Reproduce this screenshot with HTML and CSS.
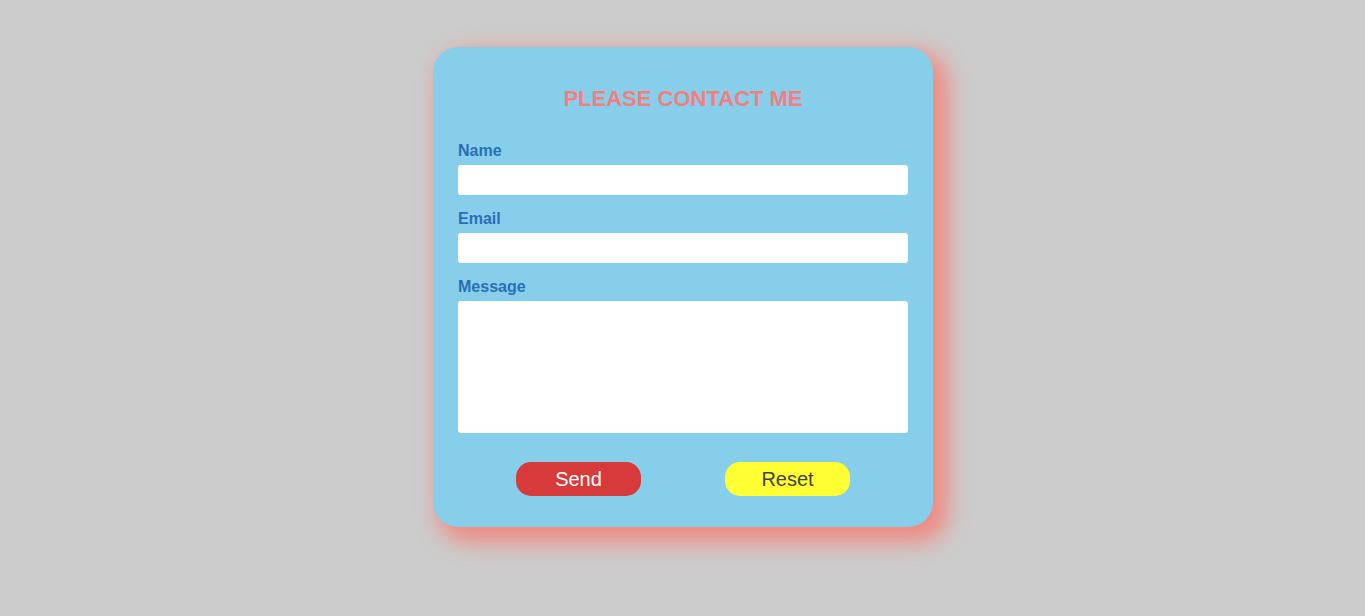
FILE: index.html
```html
<!DOCTYPE html>
<html lang="en">
<head>
<meta charset="utf-8">
<title>Contact</title>
<link rel="stylesheet" href="styles.css">
</head>
<body>
<main class="page">
  <form class="card">
    <h2 class="title">PLEASE CONTACT ME</h2>
    <label class="label" for="name">Name</label>
    <input class="field" id="name" type="text">
    <label class="label" for="email">Email</label>
    <input class="field" id="email" type="email">
    <label class="label" for="msg">Message</label>
    <textarea class="field area" id="msg"></textarea>
    <div class="actions">
      <button class="btn send" type="button">Send</button>
      <button class="btn reset" type="button">Reset</button>
    </div>
  </form>
</main>
</body>
</html>
```
FILE: styles.css
```css
* { box-sizing: border-box; }
html, body { margin: 0; padding: 0; }
body {
  background: #cccccc;
  font-family: "Liberation Sans", Arial, sans-serif;
  height: 616px;
  overflow: hidden;
}
.page {
  display: flex;
  justify-content: center;
  padding-top: 47px;
  padding-left: 1px;
}
.card {
  width: 500px;
  height: 480px;
  background: #87ceeb;
  border-radius: 25px;
  padding: 25px 25px 31px;
  box-shadow: 10px 10px 22px 5px #f08a80;
  display: flex;
  flex-direction: column;
}
.title {
  margin: 15px 0 30px;
  font-size: 22px;
  line-height: 24px;
  font-weight: bold;
  color: #f08080;
  text-align: center;
}
.label {
  display: block;
  font-size: 16px;
  line-height: 20px;
  font-weight: bold;
  color: #2a6fb6;
  margin-bottom: 4px;
}
.field {
  display: block;
  width: 100%;
  height: 30px;
  border: none;
  border-radius: 3px;
  background: #ffffff;
  margin: 0 0 14px;
  font-family: inherit;
}
.area {
  height: 132px;
  resize: none;
  margin-bottom: 29px;
}
.actions {
  display: flex;
  justify-content: center;
  gap: 84px;
}
.btn {
  width: 125px;
  height: 34px;
  border: none;
  border-radius: 15px;
  font-family: inherit;
  font-size: 20px;
  padding: 0;
}
.send { background: #d63a3a; color: #ffffff; }
.reset { background: #ffff33; color: #444444; }
```
